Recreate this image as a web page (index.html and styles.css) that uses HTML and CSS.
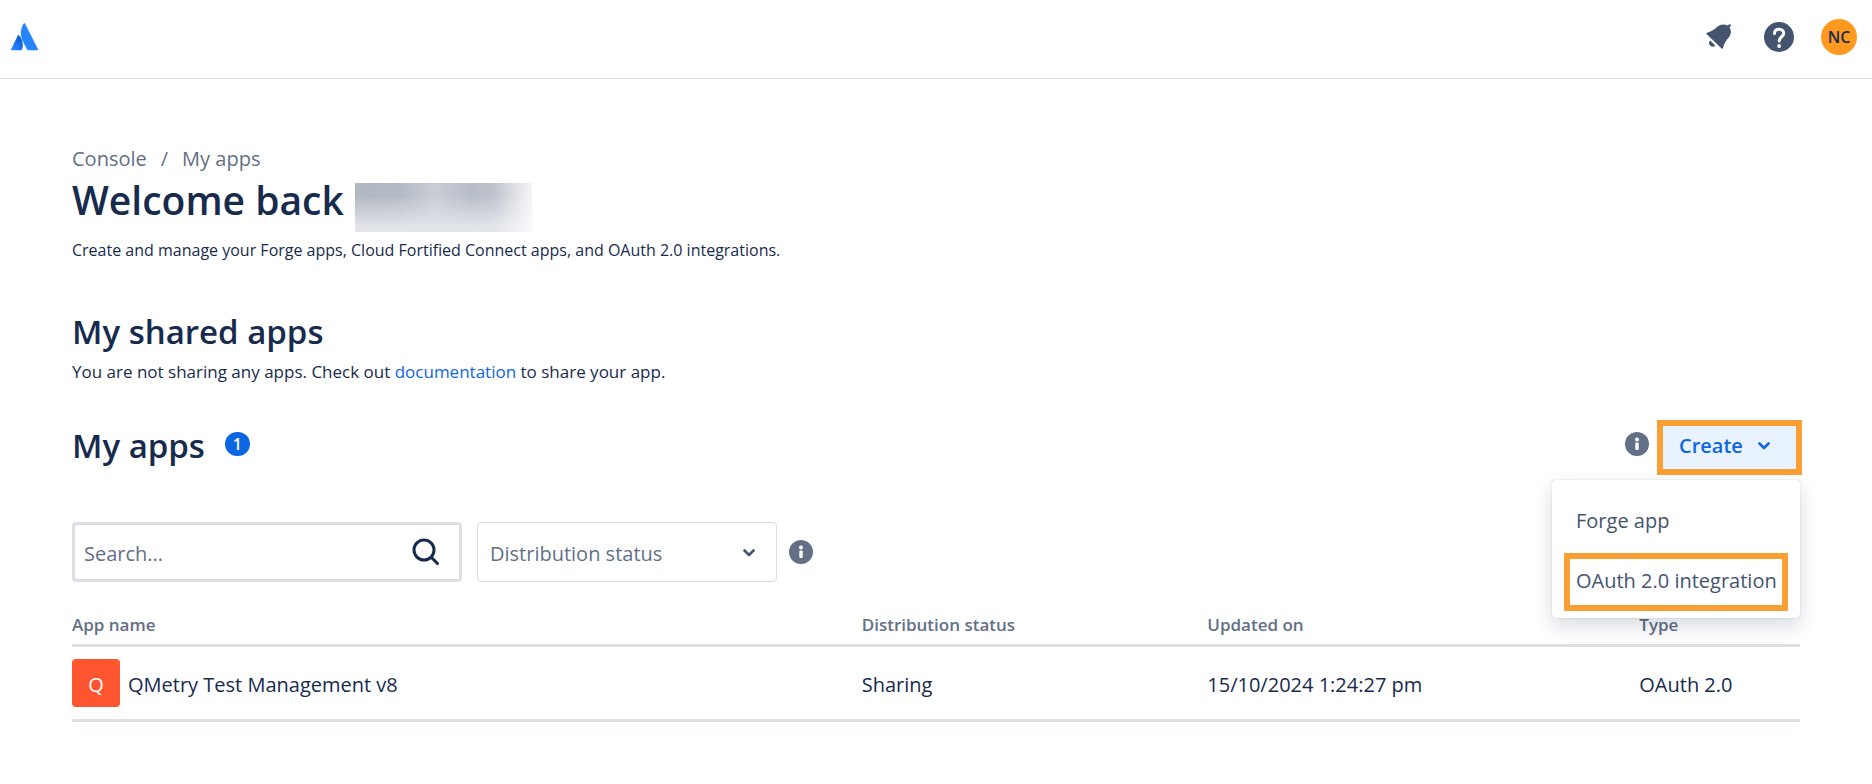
FILE: index.html
```html
<!DOCTYPE html>
<html lang="en">
<head>
  <meta charset="UTF-8" />
  <meta name="viewport" content="width=device-width, initial-scale=1" />
  <title>My apps</title>
  <link rel="stylesheet" href="styles.css">
</head>
<body>
  <!-- Top bar -->
  <header class="topbar">
    <a class="logo" href="#" aria-label="Home">
      <svg width="28" height="28" viewBox="0 0 28 28">
        <defs>
          <linearGradient id="logoShade" x1="0.9" y1="0.1" x2="0.3" y2="0.9">
            <stop offset="0" stop-color="#0052cc" />
            <stop offset="1" stop-color="#2684ff" />
          </linearGradient>
        </defs>
        <path fill="url(#logoShade)" d="M8.1 12.4c-.4-.5-1-.4-1.3.2L.1 26.2c-.2.5.1 1 .6 1h9.500c.3 0 .6-.2.7-.4 2-4.200.8-10.600-2.800-14.400z" />
        <path fill="#2684ff" d="M12.7.6c-3.700 6-3.500 12.500-1 17.500l4.500 8.700c.1.3.4.4.7.4h9.500c.5 0 .8-.5.6-1L14 .6c-.3-.6-1-.6-1.300 0z" />
      </svg>
    </a>
    <nav class="topbar-actions">
      <button class="icon-button" aria-label="Notifications">
        <svg width="26" height="26" viewBox="0 0 26 26" fill="#44546f">
          <path d="M.8 10.300c-.7-.6-.4-1.400.4-1.600C5.500 7.600 8.600 5.500 11.600 2.600c3-2.700 7-2.800 10.100-1l1.200-1c.6-.5 1.300-.4 1.700.1.400.5.400 1.100-.1 1.600l-1 1c2.200 3.300 1.800 7.300-1 10.500-2.600 3-4.500 6-5.500 10.100-.2.8-1 1.100-1.700.4z" />
          <path d="M4.200 16.400a3.600 3.600 0 0 0 5.100 5.100z" />
        </svg>
      </button>
      <button class="icon-button" aria-label="Help">
        <svg width="30" height="30" viewBox="0 0 30 30">
          <circle cx="15" cy="15" r="15" fill="#44546f" />
          <path d="M10.500 11.500c0-2.600 1.900-4.200 4.600-4.200 2.700 0 4.600 1.700 4.600 4 0 3.500-4.500 3.500-4.500 7.700" fill="none" stroke="#fff" stroke-width="3" stroke-linecap="round" />
          <circle cx="15.100" cy="24" r="1.900" fill="#fff" />
        </svg>
      </button>
      <button class="avatar">NC</button>
    </nav>
  </header>

  <main class="content">
    <nav class="breadcrumbs">
      <a href="#">Console</a>
      <span>/</span>
      <a href="#">My apps</a>
    </nav>
    <h1 class="welcome">Welcome back <span class="hidden-name"></span></h1>
    <p class="intro">Create and manage your Forge apps, Cloud Fortified Connect apps, and OAuth 2.0 integrations.</p>

    <h2 class="heading shared-heading">My shared apps</h2>
    <p class="text">You are not sharing any apps. Check out <a href="#">documentation</a> to share your app.</p>

    <!-- My apps title and create menu -->
    <div class="apps-header">
      <h2 class="heading">My apps</h2>
      <span class="badge">1</span>
      <div class="create">
        <svg class="info" width="24" height="24" viewBox="0 0 24 24">
          <circle cx="12" cy="12" r="12" fill="#626f86" />
          <circle cx="12" cy="7.5" r="2" fill="#fff" />
          <rect x="10.3" y="10.5" width="3.4" height="7.5" rx="1" fill="#fff" />
        </svg>
        <button class="create-button highlight" aria-expanded="true">
          Create
          <svg width="12" height="8" viewBox="0 0 12 8">
            <path d="M1.500 1.500L6 6l4.500-4.500" fill="none" stroke="#0c66e4" stroke-width="2.6" stroke-linecap="round" stroke-linejoin="round" />
          </svg>
        </button>
        <div class="menu">
          <button class="menu-item">Forge app</button>
          <button class="menu-item highlight">OAuth 2.0 integration</button>
        </div>
      </div>
    </div>

    <!-- Filters -->
    <div class="filters">
      <div class="search">
        <input type="text" placeholder="Search..." aria-label="Search" />
        <svg width="28" height="28" viewBox="0 0 28 28" fill="none" stroke="#172b4d" stroke-width="3" stroke-linecap="round">
          <circle cx="12" cy="12" r="10" />
          <path d="M19.500 19.500l6 6" />
        </svg>
      </div>
      <div class="status">
        <select aria-label="Distribution status">
          <option>Distribution status</option>
        </select>
        <svg width="12" height="8" viewBox="0 0 12 8">
          <path d="M1.500 1.500L6 6l4.500-4.500" fill="none" stroke="#44546f" stroke-width="2.6" stroke-linecap="round" stroke-linejoin="round" />
        </svg>
      </div>
      <svg class="info" width="24" height="24" viewBox="0 0 24 24">
        <circle cx="12" cy="12" r="12" fill="#626f86" />
        <circle cx="12" cy="7.5" r="2" fill="#fff" />
        <rect x="10.3" y="10.5" width="3.4" height="7.5" rx="1" fill="#fff" />
      </svg>
    </div>

    <table class="apps">
      <thead>
        <tr>
          <th class="col-name">App name</th>
          <th class="col-status">Distribution status</th>
          <th class="col-updated">Updated on</th>
          <th>Type</th>
        </tr>
      </thead>
      <tbody>
        <tr>
          <td>
            <div class="app">
              <span class="app-icon">Q</span>
              <span class="app-name">QMetry Test Management v8</span>
            </div>
          </td>
          <td>Sharing</td>
          <td>15/10/2024 1:24:27 pm</td>
          <td>OAuth 2.0</td>
        </tr>
      </tbody>
    </table>
  </main>
</body>
</html>
```

FILE: styles.css
```css
* {
  box-sizing: border-box;
}

body {
  margin: 0;
  background: #fff;
  color: #172b4d;
  font-family: "Open Sans", "Noto Sans", sans-serif;
  font-size: 20px;
  line-height: 28px;
}

h1, h2, p {
  margin: 0;
}

a {
  color: #0c66e4;
  text-decoration: none;
}

button, input, select {
  font: inherit;
  color: inherit;
}

button {
  padding: 0;
  border: none;
  background: none;
  cursor: pointer;
}

svg {
  display: block;
  flex: none;
}

/* Top bar */
.topbar {
  display: flex;
  align-items: center;
  justify-content: space-between;
  height: 79px;
  padding: 0 15px 5px 11px;
  border-bottom: 1px solid #dcdfe4;
}

.topbar-actions {
  display: flex;
  align-items: center;
  gap: 24px;
}

.icon-button {
  display: flex;
  justify-content: center;
  width: 36px;
}

.avatar {
  width: 36px;
  height: 36px;
  border-radius: 50%;
  background: #ff991f;
  font-size: 16px;
  font-weight: 600;
}

/* Page content */
.content {
  padding: 66px 72px 0;
}

.breadcrumbs {
  display: flex;
  gap: 14px;
  color: #626f86;
}

.breadcrumbs a {
  color: #626f86;
}

.welcome {
  display: flex;
  align-items: flex-start;
  gap: 11px;
  font-size: 39px;
  font-weight: 600;
  line-height: 54px;
}

/* Blurred user name */
.hidden-name {
  width: 177px;
  height: 49px;
  margin-top: 10px;
  background:
    linear-gradient(to right, rgba(255, 255, 255, 0) 78%, rgba(255, 255, 255, 0.8)),
    linear-gradient(rgba(225, 228, 233, 0) 25%, #e1e4e9 90%),
    linear-gradient(to right, #b2b8c2 0, #b5bbc5 25%, #c8cdd6 45%, #b8bec8 66%, #c6cad2);
}

.intro {
  margin-top: 4px;
  font-size: 16px;
}

.text {
  font-size: 17px;
}

.heading {
  font-size: 33px;
  font-weight: 600;
  line-height: 44px;
}

.shared-heading {
  margin: 46px 0 4px;
}

.apps-header {
  display: flex;
  align-items: center;
  gap: 20px;
  margin-top: 34px;
}

.apps-header .heading {
  margin-bottom: 4px;
}

.badge {
  width: 25px;
  height: 24px;
  border-radius: 12px;
  background: #0c66e4;
  color: #fff;
  font-size: 16px;
  font-weight: 600;
  line-height: 24px;
  text-align: center;
}

.badge, .create .info {
  margin-bottom: 8px;
}

/* Create button with its menu */
.create {
  position: relative;
  display: flex;
  align-items: center;
  gap: 8px;
  margin-left: auto;
  margin-right: -2px;
}

.highlight {
  border: 6px solid #fa9f33;
}

.create-button {
  display: flex;
  align-items: center;
  gap: 15px;
  width: 145px;
  height: 55px;
  padding: 0 16px 4px;
  background: #e9f2ff;
  color: #0c66e4;
  font-weight: 600;
}

.menu {
  position: absolute;
  top: 60px;
  right: 2px;
  z-index: 1;
  display: flex;
  flex-direction: column;
  gap: 3px;
  width: 248px;
  padding: 12px 12px 7px;
  border-radius: 4px;
  background: #fff;
  box-shadow: 0 0 1px rgba(9, 30, 66, 0.4), 0 8px 20px rgba(9, 30, 66, 0.16);
}

.menu-item {
  height: 58px;
  padding: 0 12px;
  color: #44546f;
  text-align: left;
  white-space: nowrap;
}

.menu-item.highlight {
  padding: 0 6px 2px;
}

/* Filters */
.filters {
  display: flex;
  align-items: center;
  margin-top: 47px;
}

.search {
  display: flex;
  align-items: center;
  width: 390px;
  height: 60px;
  padding: 0 19px 0 9px;
  border: 3px solid #dcdfe4;
  border-radius: 4px;
}

.search input {
  flex: 1;
  min-width: 0;
  padding: 4px 0 0;
  border: none;
  outline: none;
  background: none;
}

.search input::placeholder {
  color: #626f86;
  opacity: 1;
}

.status {
  position: relative;
  width: 300px;
  margin: 0 12px 0 15px;
}

.status select {
  width: 100%;
  height: 60px;
  padding: 4px 12px 0;
  border: 1px solid #dcdfe4;
  border-radius: 4px;
  background: #fff;
  color: #626f86;
  appearance: none;
}

.status svg {
  position: absolute;
  top: 27px;
  right: 22px;
  pointer-events: none;
}

/* Apps table */
.apps {
  width: 100%;
  margin-top: 29px;
  border-collapse: collapse;
  table-layout: fixed;
  text-align: left;
}

.apps th {
  padding: 0 0 5px;
  border-bottom: 3px solid #dcdfe4;
  color: #626f86;
  font-size: 17px;
  font-weight: 600;
}

.apps td {
  padding: 14px 0 10px;
  border-bottom: 3px solid #dcdfe4;
}

.apps td:first-child {
  padding: 12px 0;
}

.col-name {
  width: 45.7%;
}

.col-status {
  width: 20%;
}

.col-updated {
  width: 25%;
}

.app {
  display: flex;
  align-items: center;
  gap: 8px;
}

.app-name {
  padding-top: 4px;
}

.app-icon {
  width: 48px;
  height: 48px;
  border-radius: 4px;
  background: #ff5630;
  color: #fff;
  line-height: 52px;
  text-align: center;
}
```
